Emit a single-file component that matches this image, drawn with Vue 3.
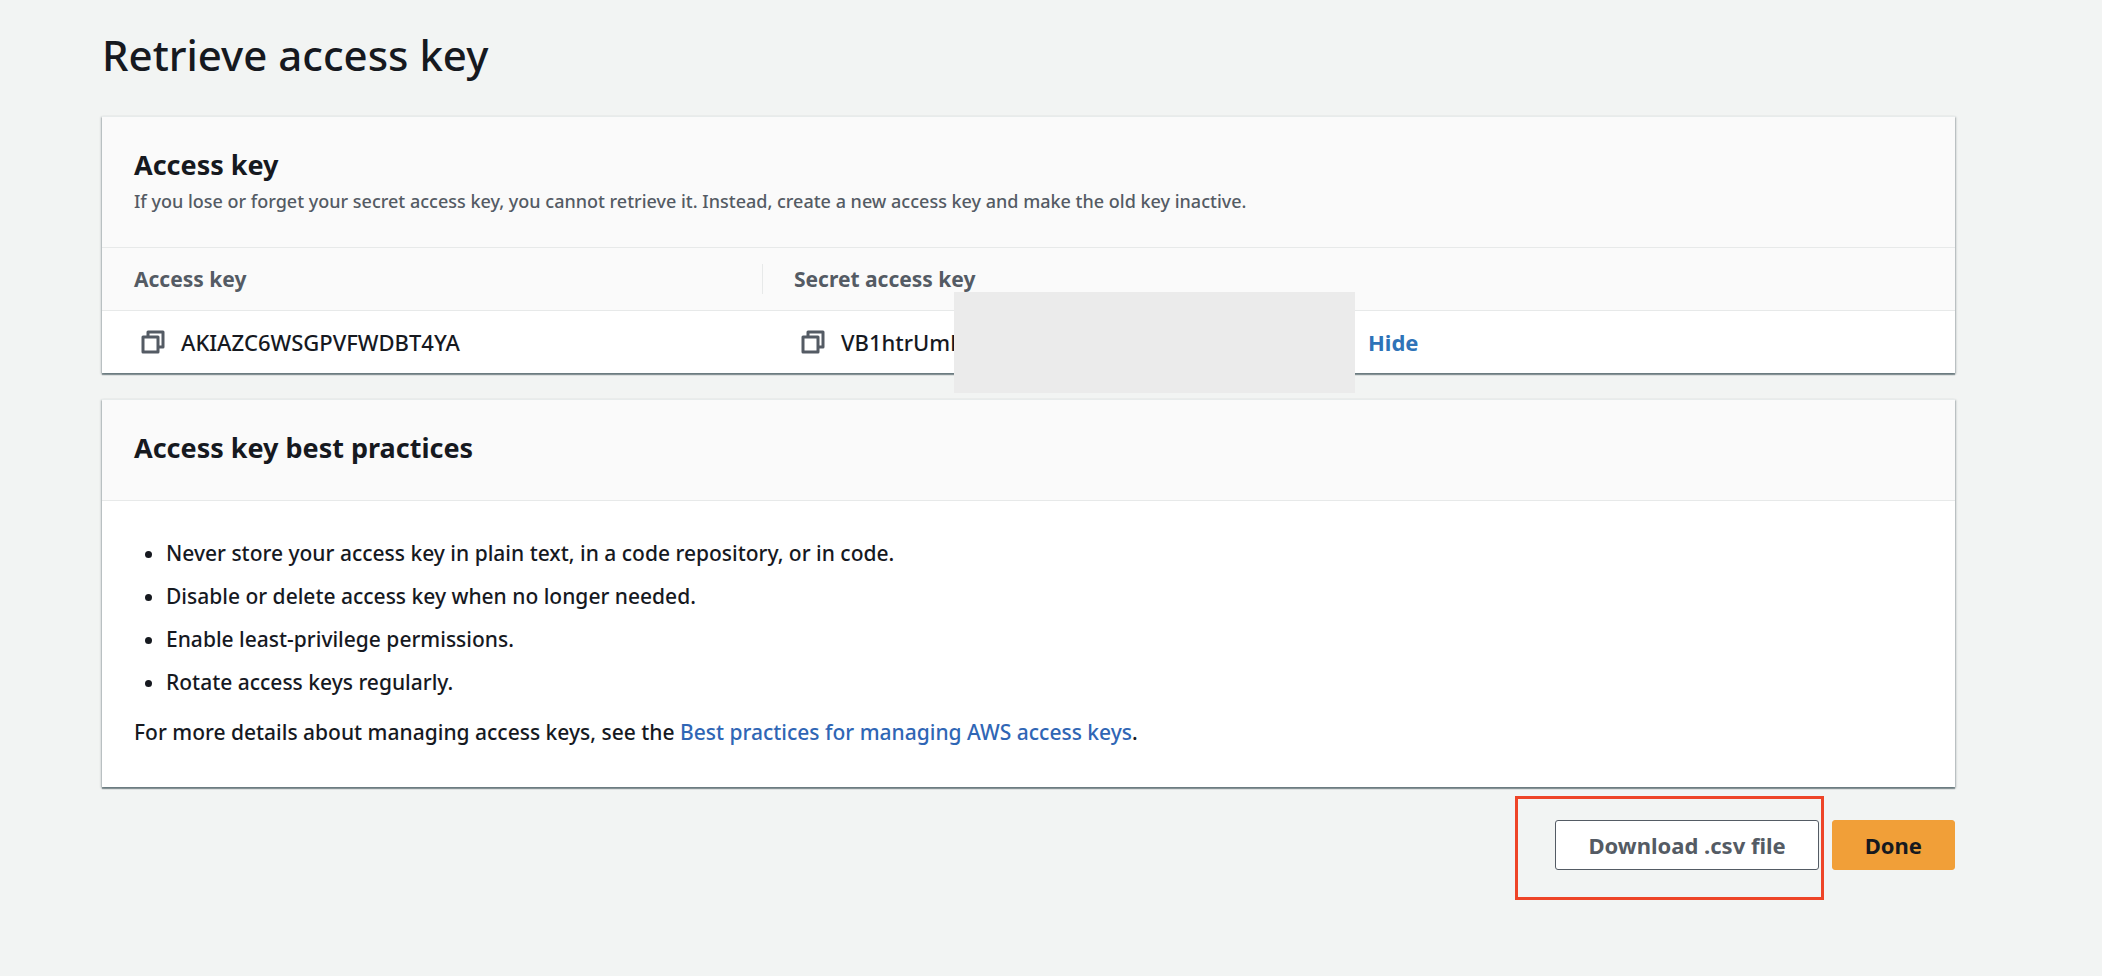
<script setup>
import { ref } from 'vue'

const accessKey = 'AKIAZC6WSGPVFWDBT4YA'
const secretKey = 'VB1htrUmF'
const visible = ref(true)

const practices = [
  'Never store your access key in plain text, in a code repository, or in code.',
  'Disable or delete access key when no longer needed.',
  'Enable least-privilege permissions.',
  'Rotate access keys regularly.',
]

function copy(value) {
  navigator.clipboard?.writeText(value)
}
</script>

<template>
  <main class="page">
    <h1 class="title">Retrieve access key</h1>

    <section class="card">
      <header class="card-header">
        <h2>Access key</h2>
        <p class="description">
          If you lose or forget your secret access key, you cannot retrieve it. Instead, create a new access key and make the old key inactive.
        </p>
      </header>
      <table class="keys">
        <thead>
          <tr>
            <th scope="col" class="col-access">Access key</th>
            <th scope="col"><span class="divider"></span>Secret access key</th>
          </tr>
        </thead>
        <tbody>
          <tr>
            <td>
              <div class="cell">
                <button class="copy" type="button" aria-label="Copy access key" @click="copy(accessKey)">
                  <svg viewBox="0 0 24 24" width="24" height="24" fill="none" stroke="currentColor" stroke-width="3" stroke-linejoin="round">
                    <path d="M2 7h15v15H2z" />
                    <path d="M7 7V2h15v15h-5" />
                  </svg>
                </button>
                <span>{{ accessKey }}</span>
              </div>
            </td>
            <td>
              <div class="cell">
                <button class="copy" type="button" aria-label="Copy secret access key" @click="copy(secretKey)">
                  <svg viewBox="0 0 24 24" width="24" height="24" fill="none" stroke="currentColor" stroke-width="3" stroke-linejoin="round">
                    <path d="M2 7h15v15H2z" />
                    <path d="M7 7V2h15v15h-5" />
                  </svg>
                </button>
                <span class="secret">{{ visible ? secretKey : '*********' }}<span class="mask"></span></span>
                <button class="toggle" type="button" @click="visible = !visible">{{ visible ? 'Hide' : 'Show' }}</button>
              </div>
            </td>
          </tr>
        </tbody>
      </table>
    </section>

    <section class="card">
      <header class="card-header">
        <h2>Access key best practices</h2>
      </header>
      <div class="card-body">
        <ul class="practices">
          <li v-for="item in practices" :key="item">{{ item }}</li>
        </ul>
        <p class="more">
          For more details about managing access keys, see the <a href="#">Best practices for managing AWS access keys</a>.
        </p>
      </div>
    </section>

    <footer class="actions">
      <div class="highlighted">
        <button class="btn" type="button">Download .csv file</button>
        <span class="highlight"></span>
      </div>
      <button class="btn btn-primary" type="button">Done</button>
    </footer>
  </main>
</template>

<style>
body {
  background: #f2f4f3;
}
</style>

<style scoped>
.page {
  box-sizing: border-box;
  padding: 27px 147px 32px 102px;
  font-family: "Noto Sans", "Open Sans", sans-serif;
  font-size: 21px;
  font-weight: 500;
  line-height: 32px;
  color: #16191f;
}
h1,
h2,
p,
ul {
  margin: 0;
}
.title {
  margin-bottom: 33px;
  font-size: 42px;
  font-weight: 500;
  line-height: 56px;
}
.card {
  margin-bottom: 26px;
  background: #fff;
  border-top: 1px solid #e7ebeb;
  box-shadow: 0 2px 1px 0 rgba(0, 28, 36, 0.35), 1px 1px 2px 0 rgba(0, 28, 36, 0.25), -1px 1px 2px 0 rgba(0, 28, 36, 0.25);
}
.card-header {
  padding: 32px;
  background: #fafafa;
  border-bottom: 1px solid #e7e9e9;
}
h2 {
  margin-bottom: 4px;
  font-size: 27px;
  font-weight: 700;
  line-height: 32px;
}
.description {
  margin-top: 6px;
  font-size: 18px;
  line-height: 28px;
  color: #545b64;
}
.keys {
  width: 100%;
  table-layout: fixed;
  border-collapse: collapse;
}
.col-access {
  width: 596px;
}
th {
  position: relative;
  padding: 15px 32px;
  background: #fafafa;
  border-bottom: 1px solid #e7e9e9;
  color: #545b64;
  font-weight: 700;
  text-align: left;
}
.divider {
  position: absolute;
  left: 0;
  top: 16px;
  bottom: 16px;
  width: 1px;
  background: #e7e9e9;
}
td {
  padding: 15px 32px 15px 39px;
}
.cell {
  display: flex;
  align-items: center;
  font-size: 22px;
}
button {
  font-family: inherit;
  font-size: inherit;
  line-height: inherit;
  cursor: pointer;
}
.copy {
  display: flex;
  margin-right: 16px;
  padding: 0;
  background: none;
  border: 0;
  color: #545b64;
}
.secret {
  position: relative;
  width: 527px;
}
.mask {
  position: absolute;
  left: 113px;
  top: -34px;
  width: 401px;
  height: 101px;
  background: #ebebeb;
}
.toggle {
  padding: 0;
  background: none;
  border: 0;
  color: #2e73b8;
  font-weight: 700;
}
.card-body {
  padding: 32px;
}
.practices {
  padding: 0 0 0 32px;
}
.practices li {
  padding: 4px 0 7px;
}
.more {
  padding: 11px 0 7px;
}
a {
  color: #2f66b5;
  text-decoration: none;
}
.actions {
  display: flex;
  justify-content: flex-end;
  gap: 13px;
  padding-top: 7px;
}
.highlighted {
  position: relative;
}
.highlight {
  position: absolute;
  inset: -24px -5px -30px -40px;
  border: 3px solid #ee4427;
  pointer-events: none;
}
.btn {
  padding: 8px 32px;
  border: 1px solid #545b64;
  border-radius: 3px;
  background: #fff;
  color: #545b64;
  font-size: 22px;
  font-weight: 700;
}
.btn-primary {
  background: #f19f38;
  border-color: #f19f38;
  color: #16191f;
}
</style>
